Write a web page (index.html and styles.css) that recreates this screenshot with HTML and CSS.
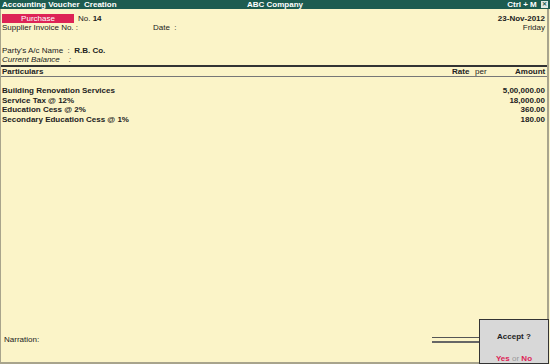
FILE: index.html
```html
<!DOCTYPE html>
<html lang="en">
<head>
    <meta charset="UTF-8">
    <title>Accounting Voucher Creation</title>
    <link rel="stylesheet" href="styles.css">
</head>
<body>
    <div class="window">
        <!-- title bar -->
        <div class="titlebar">
            <span class="title-left">Accounting Voucher&nbsp; Creation</span>
            <span class="title-mid">ABC Company</span>
            <span class="title-right">Ctrl + M <span class="close">&#x2715;</span></span>
        </div>

        <div class="body">
            <!-- voucher header -->
            <div class="head">
                <div class="row">
                    <span class="vtype">Purchase</span>
                    <span class="vno">No. <b>14</b></span>
                    <span class="date"><b>23-Nov-2012</b></span>
                </div>
                <div class="row">
                    <span class="inv">Supplier Invoice No. :</span>
                    <span class="datelbl">Date &nbsp;:</span>
                    <span class="day">Friday</span>
                </div>
                <div class="row party">
                    <span>Party's A/c Name &nbsp;: &nbsp;<b>R.B. Co.</b></span>
                </div>
                <div class="row">
                    <span class="bal">Current Balance &nbsp; &nbsp;:</span>
                </div>
            </div>

            <!-- particulars header -->
            <div class="colhead">
                <span class="c-part">Particulars</span>
                <span class="c-rate">Rate</span>
                <span class="c-per">per</span>
                <span class="c-amt">Amount</span>
            </div>

            <!-- entries -->
            <div class="items">
                <div class="item"><span>Building Renovation Services</span><span>5,00,000.00</span></div>
                <div class="item"><span>Service Tax @ 12%</span><span>18,000.00</span></div>
                <div class="item"><span>Education Cess @ 2%</span><span>360.00</span></div>
                <div class="item"><span>Secondary Education Cess @ 1%</span><span>180.00</span></div>
            </div>

            <div class="footer">
                <span class="narr">Narration:</span>
                <div class="totals">
                    <div class="tl1"></div>
                    <div class="tl2"></div>
                </div>
            </div>

            <div class="accept">
                <div class="acc-q">Accept ?</div>
                <div class="acc-a"><span class="yn">Yes</span> <span class="or">or</span> <span class="yn">No</span></div>
            </div>
        </div>
    </div>
</body>
</html>
```

FILE: styles.css
```css
body {
    margin: 0;
    font-family: "Liberation Sans", Arial, sans-serif;
    font-size: 8px;
    color: #222;
    background: #fbf4c8;
}
.window {
    width: 550px;
    height: 364px;
    display: flex;
    flex-direction: column;
}
.titlebar {
    height: 9px;
    background: #1d5c50;
    color: #fff;
    font-weight: bold;
    display: flex;
    align-items: center;
    padding: 0 2px;
    line-height: 9px;
}
.title-left { flex: 1; }
.title-mid { flex: 1; text-align: center; }
.title-right { flex: 1; text-align: right; }
.close {
    display: inline-block;
    width: 7px;
    height: 7px;
    line-height: 7px;
    font-size: 6px;
    text-align: center;
    background: #dfe9e4;
    color: #1d5c50;
    margin-left: 2px;
    vertical-align: middle;
}
.body {
    flex: 1;
    position: relative;
    display: flex;
    flex-direction: column;
    border-left: 1px solid #a8a48c;
    border-right: 2px solid #a8a48c;
    border-bottom: 2px solid #a8a48c;
    margin-right: 1px;
}
.head {
    padding: 5px 2px 0 1px;
}
.row {
    display: flex;
    align-items: center;
    height: 9px;
    line-height: 9px;
}
.vtype {
    width: 72px;
    background: #dd2356;
    color: #fff;
    text-align: center;
    margin-right: 4px;
}
.vno { flex: 1; }
.date { text-align: right; }
.inv { width: 151px; }
.datelbl { flex: 1; }
.party { margin-top: 14px; }
.bal { font-style: italic; }
.colhead {
    margin-top: 1px;
    border-top: 2px solid #333;
    border-bottom: 1px solid #777;
    height: 9px;
    line-height: 9px;
    display: flex;
    padding: 0 2px 0 1px;
    font-weight: bold;
}
.c-part { flex: 1; }
.c-rate { width: 23px; }
.c-per { width: 40px; font-weight: normal; }
.c-amt { width: 30px; text-align: right; }
.items {
    padding: 9px 2px 0 1px;
    font-weight: bold;
}
.item {
    display: flex;
    justify-content: space-between;
    height: 9.7px;
    line-height: 9.7px;
}
.footer {
    margin-top: auto;
    display: flex;
    align-items: center;
    padding: 0 0 18px 3px;
}
.narr { flex: 1; }
.totals {
    width: 47px;
    margin-right: 68px;
}
.tl1 {
    border-top: 1px solid #555;
    margin-bottom: 3px;
}
.tl2 {
    border-top: 2px solid #666;
}
.accept {
    position: absolute;
    right: -2px;
    bottom: -2px;
    width: 68px;
    height: 43px;
    background: #d8d8d8;
    border: 1px solid #333;
    text-align: center;
    font-weight: bold;
}
.acc-q { margin-top: 12px; }
.acc-a { margin-top: 13px; }
.yn { color: #dd2356; }
.or { color: #999; font-weight: normal; }
```
